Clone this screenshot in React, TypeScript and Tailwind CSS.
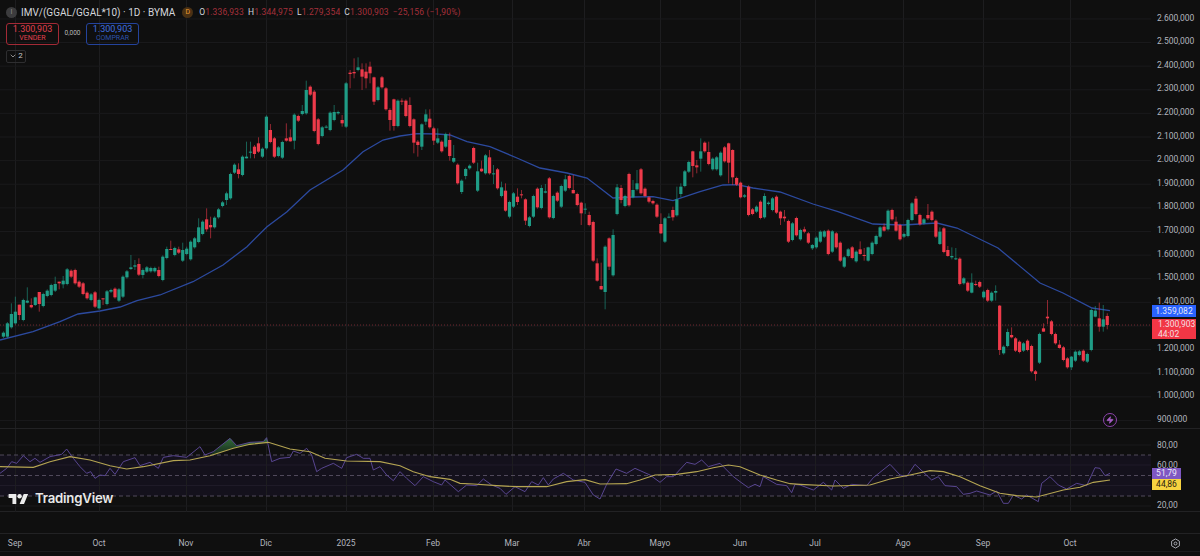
import { ChevronDown, Zap } from 'lucide-react';

// candle: [up, bodyTop, bodyBottom, wickTop?, wickBottom?], in zoomed-crop coordinates
type C = [number, number, number, number?, number?];

const seg1: C[] = [
  [1,848,860],[1,820,860],[1,792,832,760],[1,785,820,740],[0,764,795,764,810],[1,750,810],[1,752,758,712,760],[0,765,772,745,775],
  [1,742,765,740,768],[0,726,762,726,785],[1,732,768],[1,722,738],[1,705,735],[1,702,722,680],[0,695,700,695,718],[1,692,703,678,715],
  [1,658,702],[0,662,680],[0,660,700],[0,695,710],[0,700,732],[0,728,745],[1,733,750],[0,727,770],[1,750,775],[0,745,748,745,765],
  [1,724,762],[1,720,725],[0,716,742],[1,718,752],[1,680,740],[1,664,682],[1,652,657,615,660],[1,646,650,630,660],[0,642,674,625],
  [1,660,675,655,685],[1,652,665],[1,654,664],[1,654,664],[0,660,678,650],[1,620,690],[1,597,624,590],[0,597,600,572,600],[1,594,615],
  [0,598,608,590,612],[1,600,632,578],[1,596,612,590],[1,575,628],[1,565,592],[1,532,576,505],[1,515,552],[0,508,538,475,545],
  [0,525,532,500,565],[1,503,532],[1,478,502],[1,457,468],[1,430,450,425,465],[1,372,445],[1,344,368],[0,358,372,340,385],[1,320,375],
  [1,320,325,275,325],[1,305,308,275,325],[0,290,312,285,325],[0,280,305,262],[1,296,320],[1,200,295],[0,240,276,222],[0,265,320],
  [1,292,318],[1,276,323],[0,265,272,220,275],[0,262,274,238,275],[1,194,272,190,298],[0,198,212],[1,183,192,165],[1,120,190,92],
  [0,110,134],[0,125,243,120],[0,208,282],[1,232,258],[1,230,232,225,235],[1,188,240],[1,186,210,165],[1,186,190],[0,210,220,195,230],
  [1,100,230],[0,68,72,60,115],[0,66,70,25,85],[1,52,60,22],[0,58,80,40,120],[0,65,85,40,115],[0,50,70,35,100],[0,82,155,80,165],
  [1,112,150],[0,82,112],[0,115,178],[0,180,210,175,242],[0,148,228,146,242],[1,152,228],
];

const seg2: C[] = [
  [0,32,34,25,45],[0,32,78],[0,45,108,22],[0,88,158,85,190],[0,155,165,150,200],[1,103,170,100,180],[1,73,95,58,105],[0,86,112,58],
  [0,115,152,110,165],[1,145,158,115],[0,155,184],[1,132,170],[0,150,198,128,212],[1,204,215,165],[0,224,280],[1,272,306,268,312],
  [1,237,258,233,268],[1,227,235],[0,174,218],[1,244,302,218],[0,236,244,212,246],[1,196,250],[0,202,250,180],[1,250,252,225,282],
  [0,238,295],[1,292,318,275],[0,302,362,280,365],[1,336,380,332,385],[1,310,350],[0,320,336,295,345],[0,313,315,300,325],
  [0,328,392,325,405],[1,382,408],[1,318,380],[0,296,352],[1,294,354,285],[1,304,308,282,310],[0,265,382],[1,318,384],[0,308,332],
  [1,288,350],[1,268,302,255],[0,258,294],[0,300,310,255,310],[0,312,345],[0,338,370,335,405],[1,356,358,340,372],[0,375,405,365],
  [0,396,512],[0,520,572,505,575],[0,588,598,518,600],[1,470,606,466,658],[0,445,530,442,540],[1,435,556,418],[1,292,372,282],
  [0,294,330,285,340],[1,318,348],[0,252,346],[1,300,322,270,325],[1,280,298,240],[0,238,310],[0,296,318],[0,322,335,318,340],
  [0,333,340],[0,344,380],[0,402,430,370,432],[1,385,455],[1,380,382,370,385],[0,360,382,350,392],[1,328,376,290],[1,290,312,280,322],
  [1,244,288],[1,216,245],[0,184,228,182,262],[0,226,232,210,250],[1,184,206,145,245],[0,158,184],[0,186,222,155],[1,206,238],
  [1,202,238],[1,188,256],[0,172,214],[0,160,218,158,280],[0,180,262,178,285],[0,264,284],[0,278,322,275,325],[1,316,320],[0,290,375],
  [0,358,372],[1,350,365],[0,335,384],[1,318,382,310],[1,338,342],[1,325,360],[0,320,368],[0,365,385,362,405],[0,380,385,360,395],
  [0,393,455],[1,400,450],[0,384,436],
];

const seg3: C[] = [
  [1,180,208],[0,178,185,170,190],[0,190,218],[1,225,235,222,240],[1,203,232],[1,185,215],[1,184,200],[0,182,252],[1,184,245],
  [0,190,232],[0,218,272],[1,262,290],[1,238,258],[0,232,264],[1,245,274],[0,238,252,214,254],[0,255,258,234,272],[1,232,272,230,275],[1,218,252],
  [1,198,222],[1,172,200],[0,170,182,160,185],[1,122,178],[0,120,148],[0,155,182,140,185],[0,165,208],[1,192,200],[1,150,198],[1,100,150],
  [0,86,132,78],[0,135,163],[1,148,160],[0,135,145,102,150],[0,125,150],[0,152,200],[1,185,222,172,225],[0,175,246],[0,240,258,228,260],
  [1,258,262,232,268],[1,265,268,234,270],[0,266,342],[1,325,340],[0,338,362],[1,338,368,310,370],[0,342,345,332,348],[0,336,350],[1,365,382],
  [0,360,392],[1,368,392],[1,363,368,346,392],[0,407,540,405,555],[1,530,550],[1,486,528,476],[0,495,502,472,505],[0,505,542],[0,515,546],
  [1,520,542],[0,512,540],[0,528,604],[0,604,612,600,632],[1,492,578],[0,475,485,460,485],[0,440,445,390,462],[0,454,492],[0,492,520],
  [0,524,534,510,536],[0,532,570],[0,565,592],[1,560,592,558,600],[1,545,572],[1,544,555],[0,542,572],[1,552,575],[1,420,540],
  [1,422,440,408,442],[0,445,470,398,485],[1,448,470,405,485],[0,438,465,430,478],
];

const candles = [
  ...seg1.map((c) => toReal(c, 50)),
  ...seg2.map((c) => toReal(c, 90)),
  ...seg3.map((c) => toReal(c, 170)),
];

function toReal(c: C, off: number) {
  return {
    up: c[0] === 1,
    top: off + c[1] / 3,
    bot: off + c[2] / 3,
    wt: off + (c[3] ?? c[1] - 4) / 3,
    wb: off + (c[4] ?? c[2] + 4) / 3,
  };
}

const line = (pts: number[][]) => pts.map((p) => `${p[0]},${p[1]}`).join(' ');
const rsiPts = (offX: number, arr: number[][]) => arr.map((p) => [offX + p[0] / 3, 425 + p[1] / 3]);

const maLine = [
  [0,340],[33,331.7],[60,321.7],[78,314],[100,311],[120,307],[137,300.7],[160,295],[193,281.7],[223,265],[247,246.7],[267,226.7],
  [287,211.7],[310,190],[343,170],[363,151.7],[383,140],[400,136],[417,133.7],[437,134],[450,135],[467,141.7],[490,146.7],[517,158],
  [540,168],[567,173],[587,178],[600,188],[613,198],[633,197],[653,196.7],[673,200.7],[700,191.7],[723,185],[737,184.7],[753,188],
  [780,192],[813,204],[838,211.7],[873,224],[903,225],[937,223],[957,228],[998,248],[1040,283],[1063,293],[1092,308],[1110,310.7],
];

const rsi = [
  ...rsiPts(0, [[0,145],[20,130],[35,110],[50,115],[70,92],[90,110],[105,100],[120,112],[150,95],[185,88],[200,72],[220,100],[240,125],[260,145],[272,140],[285,160],[300,150],[315,152],[330,130],[345,148],[370,110],[405,98],[420,122],[450,112],[475,130],[490,97],[520,92],[560,97],[600,65],[615,90],[640,80],[690,40],[710,62],[750,52],[790,50],[800,38],[815,110],[840,100],[870,97],[880,78],[900,85],[920,70],[935,90],[950,140],[965,130],[1000,115],[1025,130],[1040,98],[1070,88],[1090,100],[1110,100],[1120,135],[1140,125],[1160,150],[1180,167]]),
  ...rsiPts(400, [[0,140],[20,160],[45,182],[70,155],[100,170],[125,180],[135,165],[175,200],[200,180],[230,182],[250,162],[275,180],[300,190],[318,208],[345,185],[375,200],[395,170],[415,180],[430,158],[445,180],[460,162],[490,145],[520,165],[555,172],[580,210],[600,222],[620,178],[648,132],[680,145],[705,130],[750,150],[780,172],[800,155],[820,155],[860,112],[885,118],[905,105],[925,125],[960,115],[1000,155],[1020,170],[1045,188],[1065,178],[1080,185],[1090,155],[1130,178],[1160,182],[1175,203],[1185,178]]),
  ...rsiPts(800, [[0,180],[40,195],[70,172],[95,195],[105,165],[130,190],[155,178],[200,182],[220,158],[270,118],[300,150],[320,155],[345,118],[395,165],[415,155],[435,182],[470,185],[490,208],[510,205],[530,198],[570,210],[590,198],[610,235],[625,235],[640,210],[665,222],[680,210],[715,230],[725,175],[750,155],[775,180],[800,192],[830,175],[860,182],[885,128],[900,130],[915,152],[930,145]]),
];

const rsiMa = [
  ...rsiPts(0, [[0,125],[100,127],[150,110],[210,95],[270,105],[330,122],[380,132],[430,125],[520,107],[570,105],[630,92],[700,70],[750,58],[805,52],[870,72],[930,80],[975,100],[1040,108],[1140,110]]),
  ...rsiPts(400, [[0,122],[40,140],[90,155],[150,163],[180,175],[220,177],[290,182],[350,185],[440,185],[500,170],[555,164],[600,177],[680,176],[720,165],[765,150],[830,148],[890,140],[940,128],[985,120],[1020,125],[1080,150],[1130,165],[1170,176]]),
  ...rsiPts(800, [[0,178],[100,183],[210,180],[270,162],[330,150],[390,137],[430,140],[480,155],[540,182],[600,205],[650,212],[710,216],[790,195],[840,187],[880,172],[930,165]]),
];

const obFill = rsiPts(0, [[630,92],[640,80],[690,40],[710,62],[750,52],[790,50],[800,38],[803,52],[750,58],[700,70]]);

const months = [
  { t: 'Sep', x: 15 }, { t: 'Oct', x: 99 }, { t: 'Nov', x: 186 }, { t: 'Dic', x: 266 }, { t: '2025', x: 346 },
  { t: 'Feb', x: 433 }, { t: 'Mar', x: 512 }, { t: 'Abr', x: 584 }, { t: 'Mayo', x: 660 }, { t: 'Jun', x: 740 },
  { t: 'Jul', x: 815 }, { t: 'Ago', x: 903 }, { t: 'Sep', x: 983 }, { t: 'Oct', x: 1070 },
];

const prices = [
  '2.600,000','2.500,000','2.400,000','2.300,000','2.200,000','2.100,000','2.000,000','1.900,000','1.800,000',
  '1.700,000','1.600,000','1.500,000','1.400,000','1.300,000','1.200,000','1.100,000','1.000,000','900,000',
];

function GridV({ y1, y2 }: { y1: number; y2: number }) {
  return (
    <>
      {months.map((m, i) => (
        <line key={i} x1={m.x + 0.5} x2={m.x + 0.5} y1={y1} y2={y2} stroke="#1d1d1f" />
      ))}
    </>
  );
}

function MainChart() {
  return (
    <svg width="1151" height="428" viewBox="0 0 1151 428" className="block">
      <GridV y1={0} y2={428} />
      {prices.map((_, k) => (
        <line key={k} x1={0} x2={1151} y1={18.9 + 23.62 * k} y2={18.9 + 23.62 * k} stroke="#1a1a1c" />
      ))}
      <line x1={0} x2={1151} y1={325} y2={325} stroke="#8a2e38" strokeWidth="0.8" strokeDasharray="1 2" />
      <polyline points={line(maLine)} fill="none" stroke="#2c4a9f" strokeWidth="1.3" />
      {candles.map((c, i) => {
        const x = 3.4 + i * 3.985;
        const col = c.up ? '#1f9c86' : '#ee3a4a';
        return (
          <g key={i}>
            <line x1={x} x2={x} y1={c.wt} y2={c.wb} stroke={col} strokeWidth="0.8" opacity="0.75" />
            <rect x={x - 1.6} y={c.top} width="3.2" height={Math.max(c.bot - c.top, 1)} fill={col} />
          </g>
        );
      })}
    </svg>
  );
}

function RsiChart() {
  return (
    <svg width="1151" height="83" viewBox="0 429 1151 83" className="block">
      <defs>
        <linearGradient id="ob" x1="0" y1="0" x2="0" y2="1">
          <stop offset="0" stopColor="#3f8f4a" stopOpacity="0.75" />
          <stop offset="1" stopColor="#2c6a38" stopOpacity="0.3" />
        </linearGradient>
      </defs>
      <rect x={0} y={455} width={1151} height={41} fill="#14111c" />
      <GridV y1={429} y2={512} />
      <line x1={0} x2={1151} y1={445} y2={445} stroke="#1a1a1c" />
      <line x1={0} x2={1151} y1={465} y2={465} stroke="#1f1b28" />
      <line x1={0} x2={1151} y1={485.5} y2={485.5} stroke="#1f1b28" />
      <line x1={0} x2={1151} y1={506} y2={506} stroke="#1a1a1c" />
      {[455, 475.5, 496].map((y) => (
        <line key={y} x1={0} x2={1151} y1={y} y2={y} stroke="#5f586c" strokeWidth="0.8" strokeDasharray="4 3" />
      ))}
      <polygon points={line(obFill)} fill="url(#ob)" />
      <polyline points={line(rsi)} fill="none" stroke="#5f4b9c" strokeWidth="0.9" />
      <polyline points={line(rsiMa)} fill="none" stroke="#b5a552" strokeWidth="1.1" />
    </svg>
  );
}

function Legend() {
  return (
    <div className="absolute left-0 top-0 flex flex-col items-start pl-[6px] pt-[6px] text-[#d1d4dc]">
      <div className="flex items-center h-[12px]">
        <span className="flex h-[11px] w-[11px] items-center justify-center rounded-full bg-[#3c3c3e] text-[7px] text-[#8a8a8a]">I</span>
        <span className="ml-[4px] text-[10px] text-[#d4d6dc]">IMV/(GGAL/GGAL*10) · 1D · BYMA</span>
        <span className="ml-[7px] flex h-[11px] w-[11px] items-center justify-center rounded-full bg-[#4a3114] text-[7px] text-[#f09b2e]">D</span>
        <span className="ml-[6px] flex gap-[4px] text-[8.5px] tracking-[0.15px] text-[#a52f3b]">
          <span><span className="text-[#d1d4dc]">O</span>1.336,933</span>
          <span><span className="text-[#d1d4dc]">H</span>1.344,975</span>
          <span><span className="text-[#d1d4dc]">L</span>1.279,354</span>
          <span><span className="text-[#d1d4dc]">C</span>1.300,903</span>
          <span>−25,156 (−1,90%)</span>
        </span>
      </div>
      <div className="mt-[4.5px] flex items-center">
        <div className="flex h-[22px] w-[53px] flex-col items-center justify-center rounded-[3px] border border-[#a32a36] text-[#e0404e]">
          <span className="text-[9px] leading-[10px]">1.300,903</span>
          <span className="text-[7px] leading-[9px]">VENDER</span>
        </div>
        <span className="w-[27px] text-center text-[6.5px] text-[#b8b8b8]">0,000</span>
        <div className="flex h-[22px] w-[53px] flex-col items-center justify-center rounded-[3px] border border-[#24439c] text-[#3f6fe0]">
          <span className="text-[9px] leading-[10px]">1.300,903</span>
          <span className="text-[7px] leading-[9px] text-[#2c52ac]">COMPRAR</span>
        </div>
      </div>
      <div className="mt-[5px] flex h-[13px] w-[20px] items-center justify-center gap-[1px] rounded-[2px] border border-[#2e2e30] text-[8px] text-[#c8c8c8]">
        <ChevronDown size={8} strokeWidth={2} />
        <span>2</span>
      </div>
    </div>
  );
}

export default function App() {
  return (
    <div className="flex h-[556px] w-[1200px] flex-col overflow-hidden bg-[#0f0f0f] font-['Roboto',sans-serif] text-[8.5px] text-[#b2b5be]">
      <div className="flex h-[428px]">
        <div className="relative w-[1151px]">
          <MainChart />
          <Legend />
          <div className="absolute left-[1103px] top-[413px] flex h-[14px] w-[14px] items-center justify-center rounded-full border border-[#8e44ad] text-[#a45cc4]">
            <Zap size={8} fill="currentColor" />
          </div>
        </div>
        <div className="relative flex-1 pl-[6px] pt-[6px]">
          {prices.map((p) => (
            <div key={p} className="flex h-[23.62px] items-center text-[8.5px] leading-none text-[#b2b5be]">{p}</div>
          ))}
          <div className="absolute left-[1px] top-[305px] flex h-[12px] w-[44px] items-center justify-center bg-[#2962ff] text-[8.5px] text-[#e4e8f4]">1.359,082</div>
          <div className="absolute left-[1px] top-[319px] flex h-[20px] w-[44px] flex-col justify-center bg-[#f23645] pl-[6px] text-[8.5px] leading-[10px] text-[#f4dfe0]">
            <span>1.300,903</span>
            <span>44:02</span>
          </div>
        </div>
      </div>
      <div className="flex h-[84px] border-y border-[#222224]">
        <div className="relative w-[1151px]">
          <RsiChart />
          <div className="absolute left-[8px] top-[63px] flex items-center gap-[6px] text-white">
            <svg width="21" height="11" viewBox="0 2 36 20" fill="#ececec">
              <path d="M14 22H7V11H0V4h14v18zM28 22h-8l7.5-18h8L28 22z" />
              <circle cx="20" cy="8" r="4" />
            </svg>
            <span className="font-['Inter',sans-serif] text-[13.2px] font-semibold leading-none tracking-[-0.2px] text-[#e8e8e8]">TradingView</span>
          </div>
        </div>
        <div className="relative flex-1 pl-[6px] pt-[6px]">
          {['80,00', '60,00', '', '20,00'].map((v, i) => (
            <div key={i} className="flex h-[20px] items-center text-[8.5px] leading-none">{v}</div>
          ))}
          <div className="absolute left-[1px] top-[39px] flex h-[11px] w-[29px] items-center justify-center bg-[#7e57c2] text-[8.5px] text-[#eee8f8]">51,79</div>
          <div className="absolute left-[1px] top-[50px] flex h-[11px] w-[29px] items-center justify-center bg-[#f7d340] text-[8.5px] text-[#2a2410]">44,86</div>
        </div>
      </div>
      <div className="h-[22px] border-b border-[#222224]" />
      <div className="flex h-[18px] items-center border-b border-[#1c1c1e] pt-[2px]">
        <div className="flex w-[1151px]" style={{ paddingLeft: months[0].x }}>
          {months.map((m, i) => (
            <div key={i} className="text-[8.5px] leading-none" style={{ width: i < months.length - 1 ? months[i + 1].x - m.x : 60 }}>
              <span className="inline-block -translate-x-1/2">{m.t}</span>
            </div>
          ))}
        </div>
        <div className="flex flex-1 justify-center pr-[1px]">
          <svg width="11" height="11" viewBox="0 0 24 24" fill="none" stroke="#b2b5be" strokeWidth="2">
            <path d="M12 2l8.5 5v10L12 22l-8.5-5V7z" strokeLinejoin="round" />
            <circle cx="12" cy="12" r="3.2" />
          </svg>
        </div>
      </div>
    </div>
  );
}
